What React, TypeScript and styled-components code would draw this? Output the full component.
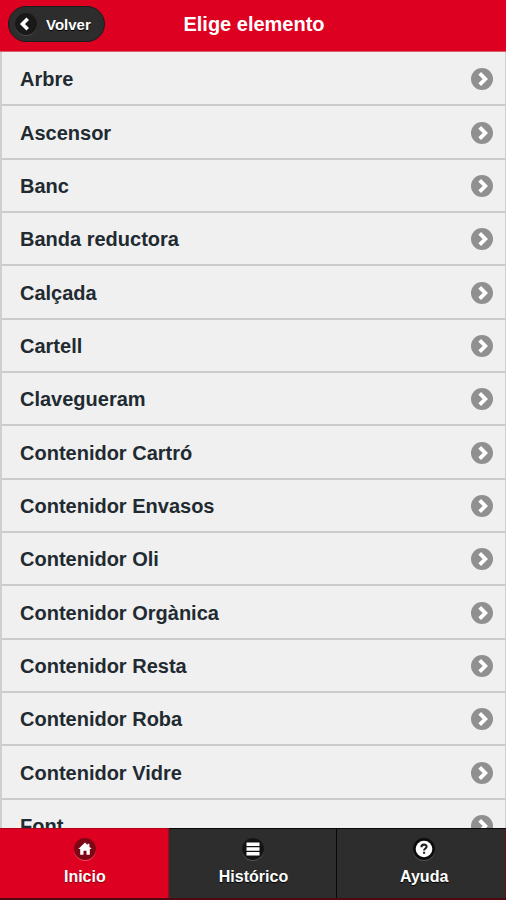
import React from "react";
import styled, { createGlobalStyle, css } from "styled-components";

const GlobalStyle = createGlobalStyle`
  *, *::before, *::after { box-sizing: border-box; }
  body {
    margin: 0;
    background: #f0f0f0;
    font-family: "Liberation Sans", Arial, Helvetica, sans-serif;
    font-weight: bold;
  }
`;

const Page = styled.div`
  display: flex;
  flex-direction: column;
  height: 100vh;
`;

const Header = styled.header`
  display: grid;
  grid-template-columns: 1fr auto 1fr;
  align-items: center;
  flex: none;
  height: 52px;
  padding: 0 8px 3px;
  background: #dd0020;
  border-bottom: 1px solid #d6606c;
`;

const BackButton = styled.button`
  display: flex;
  align-items: center;
  justify-self: start;
  gap: 8px;
  height: 36px;
  padding: 0 13px 0 5px;
  border: 1px solid #1c1c1c;
  border-radius: 18px;
  background: #2d2d2d;
  color: #fff;
  font: bold 15px "Liberation Sans", Arial, sans-serif;
  text-shadow: 0 1px 0 #000;
  cursor: pointer;
`;

const Title = styled.h1`
  margin: 0;
  padding-left: 2px;
  color: #fff;
  font-size: 20px;
  line-height: 24px;
`;

const List = styled.ul`
  flex: 1;
  min-height: 0;
  margin: 0;
  padding: 1px 0 0;
  border: solid #cfcfcf;
  border-width: 0 1px 0 2px;
  list-style: none;
  overflow-y: auto;
  scrollbar-width: none;
`;

const Item = styled.li`
  height: 53px;
  border-bottom: 2px solid #cbcbcb;

  &:nth-child(3n + 2) {
    height: 54px;
  }
`;

const ItemLink = styled.a`
  display: flex;
  align-items: center;
  justify-content: space-between;
  height: 100%;
  padding: 1px 11px 0 18px;
  color: #222a31;
  font-size: 20px;
  line-height: 24px;
  text-decoration: none;
`;

const Nav = styled.nav`
  display: grid;
  grid-template-columns: repeat(3, 1fr);
  flex: none;
  height: 72px;
  border-bottom: 2px solid #50070f;
  background: #2d2d2d;
`;

const Tab = styled.a<{ $active?: boolean }>`
  display: flex;
  flex-direction: column;
  align-items: center;
  gap: 6px;
  padding: 8px 0 0 2px;
  border-top: 1px solid #080808;
  border-right: 1px solid #080808;
  color: #fff;
  font-size: 16px;
  line-height: 20px;
  text-decoration: none;
  text-shadow: 0 1px 1px #000;

  &:last-child {
    padding-left: 6px;
    border-right-color: #64101a;
  }

  ${({ $active }) =>
    $active &&
    css`
      border-color: #b0001a;
      background: #dd0020;
      text-shadow: 0 1px 1px #7d0012;
    `}
`;

const Icon = styled.svg`
  display: block;
  flex: none;
`;

const BackIcon = () => (
  <Icon width="24" height="24" viewBox="0 0 24 24" aria-hidden="true">
    <circle cx="12" cy="13" r="11" fill="#484848" />
    <circle cx="12" cy="12" r="11" fill="#191919" />
    <path d="M13.7 6.8 8.5 12l5.2 5.2" fill="none" stroke="#fff" strokeWidth="3.6" />
  </Icon>
);

const ArrowIcon = () => (
  <Icon width="24" height="24" viewBox="0 0 24 24" aria-hidden="true">
    <circle cx="12" cy="12" r="11" fill="#909090" />
    <path d="M9.7 6.4 15.3 12l-5.6 5.6" fill="none" stroke="#fff" strokeWidth="3.8" />
  </Icon>
);

const HomeIcon = () => (
  <Icon width="24" height="24" viewBox="0 0 24 24" aria-hidden="true">
    <circle cx="12" cy="13" r="11" fill="#ee4a5a" />
    <circle cx="12" cy="12" r="11" fill="#7d0715" />
    <path d="M12 5.5 5.3 12h1.9v5.8h3.3v-4h3v4h3.3V12h1.9l-2.3-2.2V6.8h-1.9v1.1z" fill="#fff" />
  </Icon>
);

const BarsIcon = () => (
  <Icon width="24" height="24" viewBox="0 0 24 24" aria-hidden="true">
    <circle cx="12" cy="13" r="11" fill="#555" />
    <circle cx="12" cy="12" r="11" fill="#141414" />
    <path d="M5.5 5.4h13v3.5h-13zM5.5 10.2h13v3.5h-13zM5.5 15h13v3.5h-13z" fill="#fff" />
  </Icon>
);

const HelpIcon = () => (
  <Icon width="24" height="24" viewBox="0 0 24 24" aria-hidden="true">
    <circle cx="12" cy="13" r="11" fill="#555" />
    <circle cx="12" cy="12" r="11" fill="#0c0c0c" />
    <circle cx="12" cy="12" r="8.3" fill="#fff" />
    <path
      d="M9.4 10.2c0-3.4 5.2-3.4 5.2-.4 0 1.7-2.5 1.7-2.5 3.6M12.1 14.7v2.1"
      fill="none"
      stroke="#222"
      strokeWidth="2.1"
    />
  </Icon>
);

const elements = [
  "Arbre",
  "Ascensor",
  "Banc",
  "Banda reductora",
  "Calçada",
  "Cartell",
  "Clavegueram",
  "Contenidor Cartró",
  "Contenidor Envasos",
  "Contenidor Oli",
  "Contenidor Orgànica",
  "Contenidor Resta",
  "Contenidor Roba",
  "Contenidor Vidre",
  "Font",
];

export default function App() {
  return (
    <>
      <GlobalStyle />
      <Page>
        <Header>
          <BackButton type="button">
            <BackIcon />
            Volver
          </BackButton>
          <Title>Elige elemento</Title>
        </Header>
        <List>
          {elements.map((name) => (
            <Item key={name}>
              <ItemLink href="#">
                {name}
                <ArrowIcon />
              </ItemLink>
            </Item>
          ))}
        </List>
        <Nav>
          <Tab href="#" $active aria-current="page">
            <HomeIcon />
            Inicio
          </Tab>
          <Tab href="#">
            <BarsIcon />
            Histórico
          </Tab>
          <Tab href="#">
            <HelpIcon />
            Ayuda
          </Tab>
        </Nav>
      </Page>
    </>
  );
}
